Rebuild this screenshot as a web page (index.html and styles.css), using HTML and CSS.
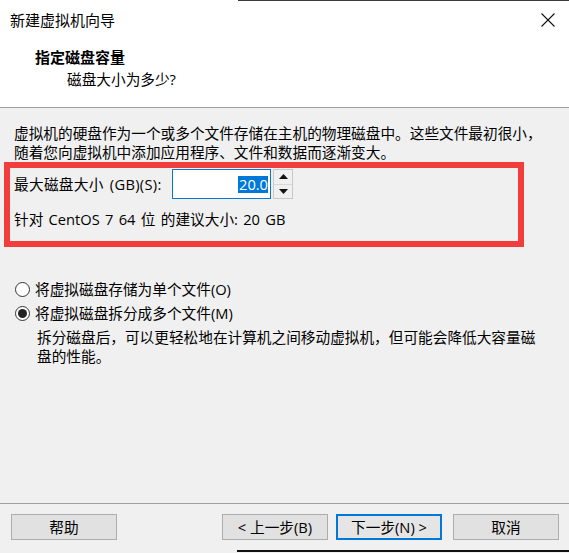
FILE: index.html
```html
<!DOCTYPE html>
<html lang="zh-CN">
<head>
<meta charset="utf-8">
<title>新建虚拟机向导</title>
<link rel="stylesheet" href="styles.css">
</head>
<body>
<div class="dialog">
  <header class="header">
    <div class="titlebar">
      <span class="title">新建虚拟机向导</span>
      <svg class="close" width="16" height="16" viewBox="0 0 16 16"><path d="M1.5 1.5 L14.5 14.5 M14.5 1.5 L1.5 14.5" stroke="#111" stroke-width="1.1" fill="none"/></svg>
    </div>
    <div class="heading">指定磁盘容量</div>
    <div class="subheading">磁盘大小为多少?</div>
  </header>

  <main class="content">
    <p class="intro">虚拟机的硬盘作为一个或多个文件存储在主机的物理磁盘中。这些文件最初很小，<br>随着您向虚拟机中添加应用程序、文件和数据而逐渐变大。</p>

    <section class="highlight">
      <div class="size-row">
        <span class="size-label">最大磁盘大小 (GB)(S):</span>
        <div class="num-field"><span class="sel">20.0</span></div>
        <div class="spinner">
          <div class="spin-btn"><svg width="9" height="5" viewBox="0 0 9 5"><path d="M4.5 0 L9 5 L0 5 Z" fill="#111"/></svg></div>
          <div class="spin-btn"><svg width="9" height="5" viewBox="0 0 9 5"><path d="M0 0 L9 0 L4.5 5 Z" fill="#111"/></svg></div>
        </div>
      </div>
      <div class="recommend">针对 CentOS 7 64 位 的建议大小: 20 GB</div>
    </section>

    <div class="options">
      <label class="radio-row"><span class="radio"></span><span>将虚拟磁盘存储为单个文件(O)</span></label>
      <label class="radio-row"><span class="radio checked"></span><span>将虚拟磁盘拆分成多个文件(M)</span></label>
      <p class="desc">拆分磁盘后，可以更轻松地在计算机之间移动虚拟机，但可能会降低大容量磁<br>盘的性能。</p>
    </div>
  </main>

  <footer class="footer">
    <button class="btn">帮助</button>
    <div class="nav">
      <button class="btn">&lt; 上一步(B)</button>
      <button class="btn btn-default">下一步(N) &gt;</button>
      <button class="btn btn-cancel">取消</button>
    </div>
  </footer>

  <div class="edge-top"></div>
  <div class="edge-bottom"></div>
</div>
</body>
</html>
```

FILE: styles.css
```css
* { box-sizing: border-box; }

html, body {
  margin: 0;
  padding: 0;
}

body {
  width: 569px;
  height: 553px;
  overflow: hidden;
  background: #f0f0f0;
  font-family: "Open Sans", "Noto Sans CJK SC", sans-serif;
  font-size: 14.67px;
  color: #000;
}

.dialog {
  position: relative;
  width: 569px;
  height: 553px;
  display: flex;
  flex-direction: column;
}

.header {
  height: 108px;
  background: #fff;
  border-bottom: 1px solid #a0a0a0;
  flex: none;
}

.titlebar {
  height: 40px;
  display: flex;
  align-items: center;
  justify-content: space-between;
  padding: 0 13px 0 10px;
}

.title {
  font-size: 15px;
  line-height: 18px;
}

.close { display: block; margin-top: -1px; }

.heading {
  margin-top: 8px;
  padding-left: 35px;
  font-weight: bold;
  font-size: 15px;
  line-height: 18px;
}

.subheading {
  margin-top: 4px;
  padding-left: 67px;
  line-height: 18px;
}

.content {
  flex: 1;
  display: flex;
  flex-direction: column;
}

.intro {
  margin: 16px 0 0 14px;
  line-height: 19px;
}

.highlight {
  margin: 0 0 0 4px;
  width: 520px;
  height: 85px;
  border: 6px solid #f23d3d;
  padding: 1px 0 0 4px;
}

.size-row {
  display: flex;
  align-items: center;
  height: 30px;
}

.size-label {
  width: 158px;
  flex: none;
  line-height: 18px;
  white-space: nowrap;
  word-spacing: 2px;
  letter-spacing: 0.3px;
}

.num-field {
  width: 99px;
  height: 30px;
  background: #fff;
  border: 1px solid #0078d7;
  display: flex;
  align-items: center;
  justify-content: flex-end;
  padding-right: 2px;
}

.sel {
  background: #0078d7;
  color: #fff;
  line-height: 17px;
  padding: 0 0 0 1px;
}

.spinner {
  margin-left: 2px;
  width: 20px;
  height: 30px;
  display: flex;
  flex-direction: column;
  border: 1px solid #c8c8c8;
  background: #f0f0f0;
}

.spin-btn {
  flex: 1;
  display: flex;
  align-items: center;
  justify-content: center;
}

.spin-btn + .spin-btn { border-top: 1px solid #d8d8d8; }

.spin-btn svg { display: block; }

.recommend {
  margin-top: 11px;
  line-height: 18px;
  word-spacing: 1.5px;
}

.options {
  margin-top: 33px;
  display: flex;
  flex-direction: column;
  gap: 6px;
}

.radio-row {
  display: flex;
  align-items: center;
  padding-left: 15px;
  line-height: 18px;
}

.radio {
  width: 15px;
  height: 15px;
  border: 1px solid #333;
  border-radius: 50%;
  background: #fff;
  margin-right: 5px;
  flex: none;
  display: flex;
  align-items: center;
  justify-content: center;
}

.radio.checked::after {
  content: "";
  width: 9px;
  height: 9px;
  border-radius: 50%;
  background: #222;
}

.desc {
  margin: 0 0 0 37px;
  line-height: 19px;
}

.footer {
  height: 50px;
  flex: none;
  border-top: 1px solid #a0a0a0;
  display: flex;
  align-items: flex-start;
  justify-content: space-between;
  padding: 10px 10px 0 11px;
}

.nav {
  display: flex;
  gap: 8px;
}

.btn {
  width: 106px;
  height: 26px;
  margin: 0;
  padding: 0;
  font: inherit;
  color: #000;
  background: #e1e1e1;
  border: 1px solid #adadad;
  line-height: 22px;
}

.btn-default {
  border: 2px solid #0078d7;
  background: #e5e5e5;
}

.btn-cancel { margin-left: 3px; }

.edge-top {
  position: absolute;
  top: 0;
  left: 238px;
  right: 0;
  height: 1px;
  background: #3a3a3a;
}

.edge-bottom {
  position: absolute;
  top: 550px;
  left: 237px;
  right: 0;
  height: 2px;
  background: #111;
}
```
